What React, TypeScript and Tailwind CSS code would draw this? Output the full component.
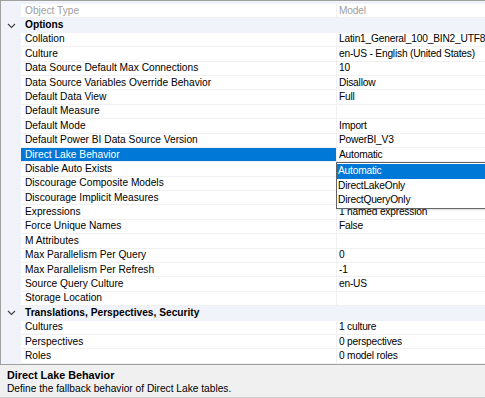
const rows: { name: string; value?: string; cat?: boolean; gray?: boolean }[] = [
  { name: "Object Type", value: "Model", gray: true },
  { name: "Options", cat: true },
  { name: "Collation", value: "Latin1_General_100_BIN2_UTF8" },
  { name: "Culture", value: "en-US - English (United States)" },
  { name: "Data Source Default Max Connections", value: "10" },
  { name: "Data Source Variables Override Behavior", value: "Disallow" },
  { name: "Default Data View", value: "Full" },
  { name: "Default Measure", value: "" },
  { name: "Default Mode", value: "Import" },
  { name: "Default Power BI Data Source Version", value: "PowerBI_V3" },
  { name: "Direct Lake Behavior", value: "Automatic" },
  { name: "Disable Auto Exists", value: "" },
  { name: "Discourage Composite Models", value: "" },
  { name: "Discourage Implicit Measures", value: "" },
  { name: "Expressions", value: "1 named expression" },
  { name: "Force Unique Names", value: "False" },
  { name: "M Attributes", value: "" },
  { name: "Max Parallelism Per Query", value: "0" },
  { name: "Max Parallelism Per Refresh", value: "-1" },
  { name: "Source Query Culture", value: "en-US" },
  { name: "Storage Location", value: "" },
  { name: "Translations, Perspectives, Security", cat: true },
  { name: "Cultures", value: "1 culture" },
  { name: "Perspectives", value: "0 perspectives" },
  { name: "Roles", value: "0 model roles" },
];

function Chevron() {
  return (
    <svg width="9" height="6" viewBox="0 0 9 6" className="ml-[6px] mr-[9px] shrink-0">
      <path d="M1 1 L4.5 4.5 L8 1" fill="none" stroke="#404040" strokeWidth="1.1" />
    </svg>
  );
}

export default function App() {
  return (
    <div
      className="w-[485px] h-[398px] bg-white overflow-hidden flex flex-col text-[10.2px] leading-none text-black whitespace-nowrap"
      style={{ fontFamily: '"Liberation Sans", Arial, sans-serif' }}
    >
      {/* grid */}
      <div className="relative flex-1 border-t border-l border-[#a0a0a0] pt-[3px] bg-[#f0f3f9]">
        {rows.map((r, i) => {
          if (r.cat) {
            return (
              <div key={i} className="h-[14.4px] flex items-center bg-[#f0f3f9] font-bold">
                <Chevron />
                {r.name}
              </div>
            );
          }
          const selected = r.name === "Direct Lake Behavior";
          return (
            <div key={i} className="h-[14.4px] flex pl-[20px]">
              <div
                className={
                  "w-[316px] flex items-center pl-[4px] border-b border-r border-[#f0f0f0] " +
                  (selected ? "bg-[#0078d7] text-white" : "bg-white") +
                  (r.gray ? " text-[#a0a0a0]" : "")
                }
              >
                {r.name}
              </div>
              <div
                className={
                  "flex-1 flex items-center pl-[2px] bg-white border-b border-[#f0f0f0] overflow-hidden tracking-[-0.2px]" +
                  (r.gray ? " text-[#a0a0a0]" : "")
                }
              >
                {r.value}
              </div>
            </div>
          );
        })}

        {/* dropdown list */}
        <div className="absolute left-[335px] top-[161px] w-[150px] h-[47px] bg-white border border-[#646464] pt-[1px] shadow-[1px_1px_2px_rgba(0,0,0,0.15)] tracking-[-0.2px]">
          <div className="h-[14.5px] flex items-center pl-[1px] bg-[#0078d7] text-white">Automatic</div>
          <div className="h-[14.5px] flex items-center pl-[1px]">DirectLakeOnly</div>
          <div className="h-[14.5px] flex items-center pl-[1px]">DirectQueryOnly</div>
        </div>
      </div>

      {/* splitter */}
      <div className="h-[3px] bg-[#f0f0f0] border-t border-[#a0a0a0]" />

      {/* description */}
      <div className="h-[33px] bg-[#f0f0f0] border-b border-[#d0d0d0] px-[7px] pt-[3px] flex flex-col gap-[4px]">
        <div className="font-bold text-[10.8px]">Direct Lake Behavior</div>
        <div>Define the fallback behavior of Direct Lake tables.</div>
      </div>
    </div>
  );
}
